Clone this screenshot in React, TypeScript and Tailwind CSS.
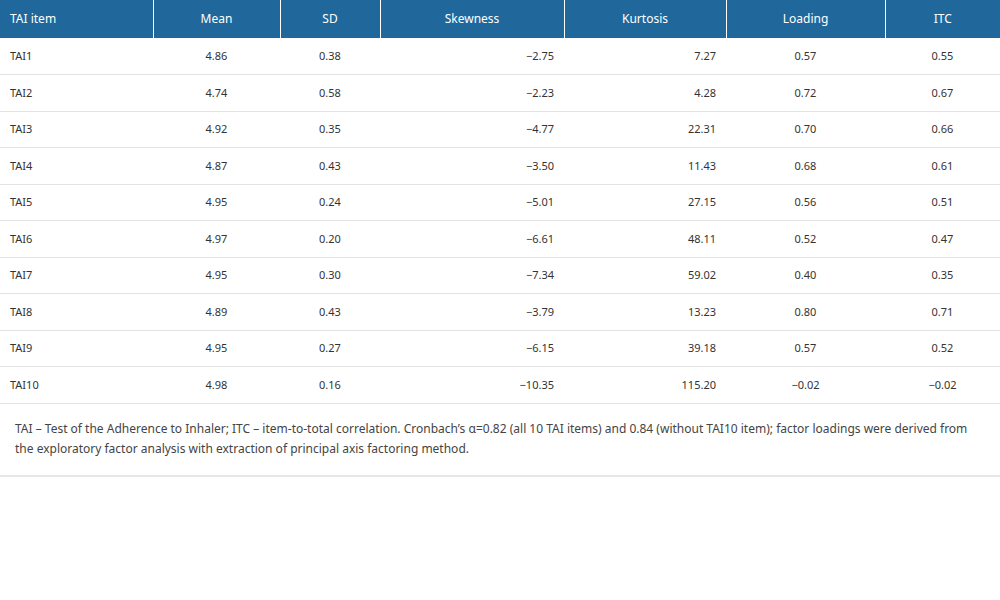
const rows = [
  ['TAI1', '4.86', '0.38', '−2.75', '7.27', '0.57', '0.55'],
  ['TAI2', '4.74', '0.58', '−2.23', '4.28', '0.72', '0.67'],
  ['TAI3', '4.92', '0.35', '−4.77', '22.31', '0.70', '0.66'],
  ['TAI4', '4.87', '0.43', '−3.50', '11.43', '0.68', '0.61'],
  ['TAI5', '4.95', '0.24', '−5.01', '27.15', '0.56', '0.51'],
  ['TAI6', '4.97', '0.20', '−6.61', '48.11', '0.52', '0.47'],
  ['TAI7', '4.95', '0.30', '−7.34', '59.02', '0.40', '0.35'],
  ['TAI8', '4.89', '0.43', '−3.79', '13.23', '0.80', '0.71'],
  ['TAI9', '4.95', '0.27', '−6.15', '39.18', '0.57', '0.52'],
  ['TAI10', '4.98', '0.16', '−10.35', '115.20', '−0.02', '−0.02'],
];

const heads = ['TAI item', 'Mean', 'SD', 'Skewness', 'Kurtosis', 'Loading', 'ITC'];
const widths = ['w-[153px]', 'w-[127px]', 'w-[100px]', 'w-[184px]', 'w-[162px]', 'w-[159px]', 'w-[115px]'];
const align = ['text-left', 'text-center', 'text-center', 'text-right', 'text-right', 'text-center', 'text-center'];

export default function App() {
  return (
    <div className="w-[1000px] h-[600px] bg-white text-[#333] font-['Open_Sans',sans-serif]">
      <table className="w-[1000px] border-collapse table-fixed">
        <thead>
          <tr className="bg-[#20689b] text-white text-[12px] h-[38px]">
            {heads.map((h, i) => (
              <th key={h} className={`${widths[i]} font-normal px-[10px] border-l border-white first:border-l-0 ${i === 0 ? 'text-left' : 'text-center'}`}>
                {h}
              </th>
            ))}
          </tr>
        </thead>
        <tbody>
          {rows.map((r) => (
            <tr key={r[0]} className="h-[36.5px] border-b border-[#e3e3e3] text-[11px]">
              {r.map((c, i) => (
                <td key={i} className={`px-[10px] ${align[i]}`}>{c}</td>
              ))}
            </tr>
          ))}
        </tbody>
      </table>
      <div className="px-[15px] pt-[15px] pb-[16px] border-b-2 border-[#e6e6e6] text-[12px] leading-[20px] text-[#444]">
        TAI – Test of the Adherence to Inhaler; ITC – item-to-total correlation. Cronbach’s α=0.82 (all 10 TAI items) and 0.84 (without TAI10 item); factor loadings were derived from the exploratory factor analysis with extraction of principal axis factoring method.
      </div>
    </div>
  );
}
